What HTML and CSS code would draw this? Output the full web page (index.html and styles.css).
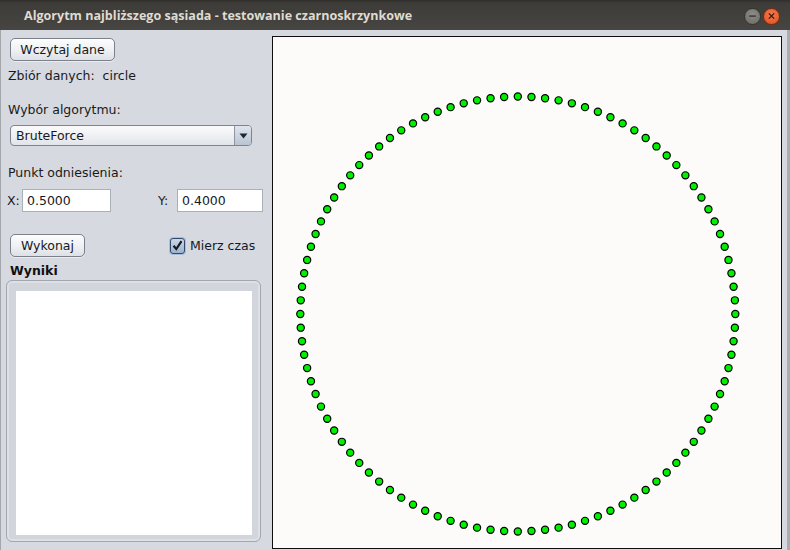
FILE: index.html
```html
<!DOCTYPE html>
<html lang="pl">
<head>
<meta charset="utf-8">
<title>Algorytm najbliższego sąsiada</title>
<link rel="stylesheet" href="styles.css">
</head>
<body>
<div class="window">
  <div class="titlebar">
    <span class="title">Algorytm najbliższego sąsiada - testowanie czarnoskrzynkowe</span>
    <div class="controls">
      <span class="wbtn min"><svg width="16" height="16" viewBox="0 0 16 16"><rect x="4.5" y="7.3" width="7" height="1.6" fill="#3a3a37"/></svg></span>
      <span class="wbtn close"><svg width="16" height="16" viewBox="0 0 16 16"><path d="M5.2 5.2 L10.8 10.8 M10.8 5.2 L5.2 10.8" stroke="#3a1a10" stroke-width="1.5"/></svg></span>
    </div>
  </div>
  <div class="content">
    <div class="side">
      <button class="btn btn-load">Wczytaj dane</button>
      <div class="label row-data">Zbiór danych:&nbsp; circle</div>
      <div class="label row-algo">Wybór algorytmu:</div>
      <div class="combo">
        <span class="combo-text">BruteForce</span>
        <span class="combo-arrow"><svg width="9" height="6" viewBox="0 0 9 6"><path d="M0.5 0.5 H8.5 L4.5 5.5 Z" fill="#1d2733"/></svg></span>
      </div>
      <div class="label row-point">Punkt odniesienia:</div>
      <div class="coords">
        <span class="coord-label">X:</span>
        <span class="field field-x">0.5000</span>
        <span class="coord-label coord-y">Y:</span>
        <span class="field field-y">0.4000</span>
      </div>
      <div class="actions">
        <button class="btn btn-run">Wykonaj</button>
        <label class="check">
          <span class="box"><svg width="11" height="11" viewBox="0 0 11 11"><path d="M1.5 5.8 L4.3 9 L9.5 1.2" stroke="#15191f" stroke-width="2.2" fill="none"/></svg></span>
          <span>Mierz czas</span>
        </label>
      </div>
      <div class="results-title">Wyniki</div>
      <div class="results-frame">
        <div class="results-area"></div>
      </div>
    </div>
    <div class="canvas">
      <svg id="plot" class="plot" width="509" height="511" viewBox="0 0 509 511"></svg>
    </div>
  </div>
</div>
<script src="script.js"></script>
</body>
</html>
```
FILE: styles.css
```css
* { box-sizing: border-box; }
html, body { margin: 0; padding: 0; }
body {
  width: 790px;
  height: 550px;
  overflow: hidden;
  font-family: "DejaVu Sans", "Liberation Sans", sans-serif;
  font-size: 12.5px;
  color: #1a1a1a;
  background: #d6d9df;
}
.window {
  width: 790px;
  height: 550px;
  display: flex;
  flex-direction: column;
}
.titlebar {
  height: 30px;
  flex: none;
  background: linear-gradient(#2f2e2b 0, #3d3c38 3px, #464541 100%);
  display: flex;
  align-items: center;
  padding-left: 24px;
  padding-right: 10px;
}
.title {
  color: #dfdbd2;
  font-family: "Open Sans", "DejaVu Sans", sans-serif;
  font-weight: 700;
  font-size: 12.55px;
  flex: 1;
  padding-top: 1px;
}
.controls { display: flex; gap: 2px; margin-top: 2px; }
.wbtn {
  width: 17px; height: 17px; border-radius: 50%;
  display: flex; align-items: center; justify-content: center;
}
.wbtn.min {
  background: radial-gradient(circle at 50% 35%, #8e8c86, #6a6863);
  border: 1px solid #35342f;
}
.wbtn.close {
  background: radial-gradient(circle at 50% 35%, #f27a4c, #e0501f);
  border: 1px solid #7a2a10;
}
.content {
  flex: 1;
  display: flex;
  border-left: 1px solid #a3a6ab;
  border-right: 3px solid #a9acb1;
}
.side {
  width: 271px;
  flex: none;
  padding-top: 8px;
  display: flex;
  flex-direction: column;
}
.btn {
  font-family: "DejaVu Sans", sans-serif;
  font-size: 12.5px;
  color: #15191f;
  height: 23px;
  border: 1px solid #7c8088;
  border-radius: 5px;
  background: linear-gradient(#fdfdfd, #eef0f3 55%, #dde0e5);
  padding: 0;
  margin: 0;
  box-shadow: 0 1px 0 rgba(255,255,255,0.5);
}
.btn-load { width: 105px; margin-left: 9px; }
.label { height: 18px; line-height: 18px; margin-left: 7px; }
.row-data { margin-top: 6px; }
.row-algo { margin-top: 16px; }
.row-point { margin-top: 18px; }
.combo {
  margin-top: 6px;
  margin-left: 9px;
  width: 242px;
  height: 21px;
  border: 1px solid #7f858e;
  border-radius: 4px;
  display: flex;
  background: linear-gradient(#fbfbfc, #eceef1 60%, #e1e4e8);
  overflow: hidden;
}
.combo-text { flex: 1; line-height: 19px; padding-left: 5px; color: #15191f; }
.combo-arrow {
  width: 17px;
  border-left: 1px solid #8f96a0;
  background: linear-gradient(#dfe5ee, #b9c4d2);
  display: flex; align-items: center; justify-content: center;
}
.coords {
  margin-top: 7px;
  height: 23px;
  display: flex;
  align-items: center;
}
.coord-label { margin-left: 6px; width: 15px; }
.coord-y { margin-left: 47px; width: 19px; }
.field {
  height: 23px;
  border: 1px solid #aab0b8;
  background: #fff;
  line-height: 21px;
  padding-left: 4px;
  color: #15191f;
}
.field-x { width: 89px; }
.field-y { width: 86px; margin-left: 0; }
.actions {
  margin-top: 22px;
  height: 23px;
  display: flex;
  align-items: center;
}
.btn-run { width: 75px; margin-left: 9px; }
.check {
  margin-left: 85px;
  display: flex;
  align-items: center;
  gap: 5px;
  color: #15191f;
}
.box {
  width: 15px; height: 16px;
  border: 1px solid #2f4a6d;
  border-radius: 3px;
  background: linear-gradient(#c9d6e6, #9fb3cc);
  box-shadow: 0 0 0 1px #a8bfdc;
  display: flex; align-items: center; justify-content: center;
}
.results-title {
  margin-top: 5px;
  margin-left: 9px;
  height: 18px;
  line-height: 18px;
  font-weight: 700;
  color: #101010;
}
.results-frame {
  margin-left: 5px;
  width: 255px;
  height: 262px;
  border: 1px solid #a3a8b0;
  border-radius: 6px;
  background: #d2d6dc;
  padding: 10px 8px 6px 9px;
  box-shadow: inset 0 0 0 2px #dde0e5;
}
.results-area {
  width: 100%;
  height: 100%;
  background: #ffffff;
}
.canvas {
  margin-top: 6px;
  width: 510px;
  height: 513px;
  border: 1px solid #0f0f0f;
  background: #fcfbf9;
}
.plot { display: block; }
```
FILE: script.js
```js
(function () {
  var svg = document.getElementById('plot');
  var ns = 'http://www.w3.org/2000/svg';
  var cx = 244.8, cy = 277, r = 217.5, n = 100;
  for (var i = 0; i < n; i++) {
    var a = i * 2 * Math.PI / n;
    var c = document.createElementNS(ns, 'circle');
    c.setAttribute('cx', (cx + r * Math.cos(a)).toFixed(2));
    c.setAttribute('cy', (cy - r * Math.sin(a)).toFixed(2));
    c.setAttribute('r', '3.6');
    c.setAttribute('fill', '#00f000');
    c.setAttribute('stroke', '#000');
    c.setAttribute('stroke-width', '1.2');
    svg.appendChild(c);
  }
})();
```
